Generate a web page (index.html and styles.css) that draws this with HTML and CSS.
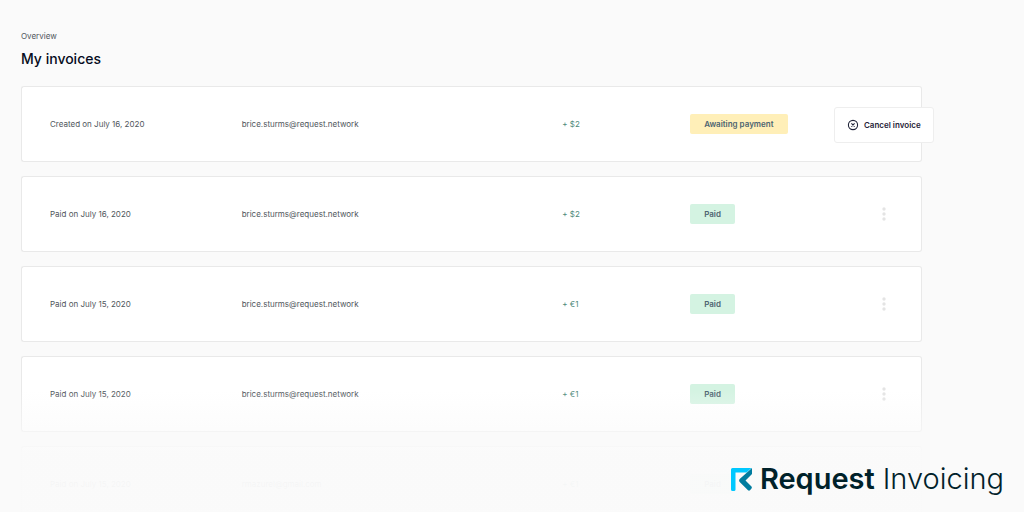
FILE: index.html
```html
<!DOCTYPE html>
<html lang="en">
<head>
<meta charset="utf-8">
<title>Request Invoicing</title>
<link rel="stylesheet" href="styles.css">
</head>
<body>
<div class="page">
  <main class="content">
    <p class="crumb">Overview</p>
    <h1 class="title">My invoices</h1>
    <table class="invoices">
      <colgroup><col class="col-date"><col class="col-email"><col class="col-amount"><col class="col-status"><col></colgroup>
      <tbody>
        <tr>
          <td>Created on July 16, 2020</td><td>brice.sturms@request.network</td><td class="amount">+ $2</td>
          <td><span class="badge badge-waiting">Awaiting payment</span></td>
          <td class="actions">
            <div class="menu">
              <button class="menu-item" type="button">
                <svg class="menu-icon" viewBox="0 0 12 12" aria-hidden="true"><circle cx="6" cy="6" r="4.6"/><path d="M4.400 4.400l3.200 3.200M7.600 4.400l-3.200 3.200"/></svg>
                Cancel invoice
              </button>
            </div>
          </td>
        </tr>
        <tr>
          <td>Paid on July 16, 2020</td><td>brice.sturms@request.network</td><td class="amount">+ $2</td>
          <td><span class="badge">Paid</span></td>
          <td class="actions"><button class="more" type="button" aria-label="More actions"><svg class="dots" viewBox="0 0 4 14"><circle cx="2" cy="2" r="1.7"/><circle cx="2" cy="7" r="1.7"/><circle cx="2" cy="12" r="1.7"/></svg></button></td>
        </tr>
        <tr>
          <td>Paid on July 15, 2020</td><td>brice.sturms@request.network</td><td class="amount">+ €1</td>
          <td><span class="badge">Paid</span></td>
          <td class="actions"><button class="more" type="button" aria-label="More actions"><svg class="dots" viewBox="0 0 4 14"><circle cx="2" cy="2" r="1.7"/><circle cx="2" cy="7" r="1.7"/><circle cx="2" cy="12" r="1.7"/></svg></button></td>
        </tr>
        <tr>
          <td>Paid on July 15, 2020</td><td>brice.sturms@request.network</td><td class="amount">+ €1</td>
          <td><span class="badge">Paid</span></td>
          <td class="actions"><button class="more" type="button" aria-label="More actions"><svg class="dots" viewBox="0 0 4 14"><circle cx="2" cy="2" r="1.7"/><circle cx="2" cy="7" r="1.7"/><circle cx="2" cy="12" r="1.7"/></svg></button></td>
        </tr>
        <tr>
          <td>Paid on July 15, 2020</td><td>rmazurel@gmail.com</td><td class="amount">+ €1</td>
          <td><span class="badge">Paid</span></td>
          <td class="actions"></td>
        </tr>
      </tbody>
    </table>
  </main>
  <footer class="fade">
    <div class="brand">
      <svg class="brand-mark" viewBox="0 0 21 23" aria-hidden="true">
        <path fill="#00c8ff" d="M1.500 0H20.500L15.500 4.500H4.500V21.500Q4.500 23 3 23H1.500Q0 23 0 21.500V1.500Q0 0 1.500 0Z"/>
        <path fill="#007c9f" d="M21 0V6L14.500 12.500L20.500 18.500Q21.200 19.500 20.500 20.500L19 22.300Q18 23 17 22.300L8.700 14Q7.500 12.500 8.700 11Z"/>
      </svg>
      <span class="brand-name">Request</span>
      <span class="brand-product">Invoicing</span>
    </div>
  </footer>
</div>
</body>
</html>
```
FILE: styles.css
```css
body {
  margin: 0;
  background: #fafafa;
  color: #50565c;
  font: 8px/12px Inter, "Liberation Sans", sans-serif;
}
.page {
  position: relative;
  height: 100vh;
  overflow: hidden;
}
.content {
  padding: 30px 10% 0 21px;
}
.crumb {
  margin: 0;
}
.title {
  margin: 7px 0 3px;
  color: #050b20;
  font-size: 14px;
  font-weight: 500;
  line-height: 20px;
}
.invoices {
  width: 100%;
  table-layout: fixed;
  border-collapse: separate;
  border-spacing: 0 14px;
}
.col-date { width: 24.5%; }
.col-email { width: 35.6%; }
.col-amount { width: 14.2%; }
.col-status { width: 14.2%; }
.invoices td {
  box-sizing: border-box;
  height: 76px;
  padding: 0;
  background: #fff;
  border: solid #e9e9e9;
  border-width: 1px 0;
}
.invoices td:first-child {
  padding-left: 28px;
  border-left-width: 1px;
  border-radius: 3px 0 0 3px;
}
.invoices td:last-child {
  border-right-width: 1px;
  border-radius: 0 3px 3px 0;
}
.invoices .amount {
  color: #4e8878;
}
.badge {
  display: inline-block;
  padding: 4px 14px;
  border-radius: 2px;
  background: #d4f3e2;
  color: #4d6470;
  font-weight: 600;
}
.badge-waiting {
  background: #ffefb8;
}
.actions {
  position: relative;
  text-align: right;
}
.more {
  margin-right: 30px;
  padding: 4px 5px;
  border: 0;
  background: none;
}
.dots {
  display: block;
  width: 4px;
  height: 14px;
  fill: #e4e4e4;
}
.menu {
  position: absolute;
  top: 20px;
  right: -13px;
  border: 1px solid #eeeeee;
  border-radius: 3px;
  background: #fff;
}
.menu-item {
  display: flex;
  align-items: center;
  gap: 5px;
  padding: 11px 12px;
  border: 0;
  background: none;
  color: #1f2338;
  font: inherit;
  font-weight: 600;
  white-space: nowrap;
}
.menu-icon {
  width: 12px;
  height: 12px;
  fill: none;
  stroke: #1f2338;
  stroke-width: 1.1;
}
.fade {
  position: absolute;
  inset: auto 0 0;
  box-sizing: border-box;
  height: 128px;
  padding: 0 20px 16px;
  display: flex;
  justify-content: flex-end;
  align-items: flex-end;
  background: linear-gradient(#fafafa00 5%, #fafafaf7 54%);
}
.brand {
  display: flex;
  align-items: center;
  color: #00222a;
  font-size: 29px;
  line-height: 34px;
}
.brand-mark {
  width: 21px;
  height: 23px;
  margin-right: 8px;
}
.brand-name {
  margin-right: 8px;
  font-weight: 600;
}
.brand-product {
  font-weight: 300;
}
```
